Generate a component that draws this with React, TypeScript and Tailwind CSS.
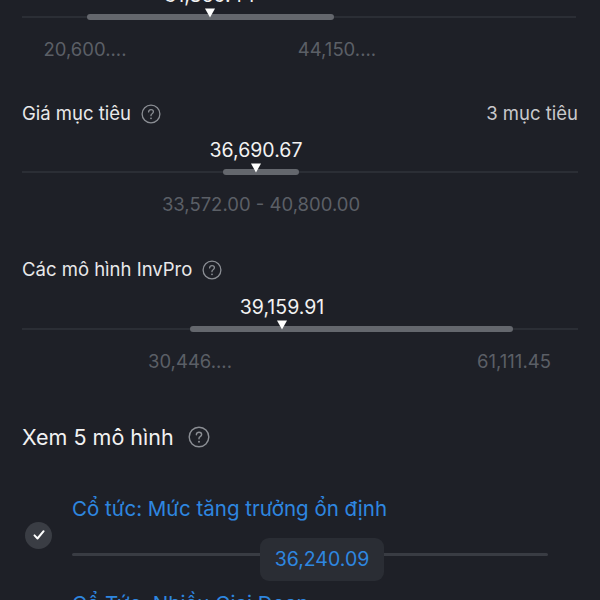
type Range = {
  value: string;
  thumb: number;
  from: number;
  to: number;
  labels: { text: string; at: number }[];
};

const W = 554;

function HelpIcon({ size = 20 }: { size?: number }) {
  return (
    <svg width={size} height={size} viewBox="0 0 20 20" fill="none">
      <circle cx="10" cy="10" r="8.9" stroke="#8b8e94" strokeWidth="1.3" />
      <path
        d="M7.6 7.9c0-1.4 1.1-2.3 2.4-2.3 1.4 0 2.4.9 2.4 2.1 0 1-.6 1.5-1.3 2-.7.4-1.1.8-1.1 1.6v.4"
        stroke="#8b8e94"
        strokeWidth="1.3"
        strokeLinecap="round"
      />
      <circle cx="10" cy="14.3" r="0.9" fill="#8b8e94" />
    </svg>
  );
}

function RangeSlider({ r }: { r: Range }) {
  return (
    <div className="flex flex-col">
      <div className="relative h-[22px]">
        <span
          className="absolute top-0 -translate-x-1/2 text-[19.5px] leading-[22px] text-[#f2f2f2] whitespace-nowrap"
          style={{ left: r.thumb }}
        >
          {r.value}
        </span>
      </div>
      <div className="relative h-[6px] mt-[8px]">
        <div className="absolute left-0 right-0 top-[2px] h-[2px] bg-[#2b2e35]" />
        <div
          className="absolute top-0 h-[6px] rounded-full bg-[#64676d]"
          style={{ left: r.from, width: r.to - r.from }}
        />
        <svg
          className="absolute -top-[6px] -translate-x-1/2"
          style={{ left: r.thumb }}
          width="11"
          height="10"
          viewBox="0 0 11 10"
        >
          <path d="M0.5 0.5h10L5.5 9.5z" fill="#ffffff" />
        </svg>
      </div>
      <div className="relative h-[20px] mt-[19px]">
        {r.labels.map((l, i) => (
          <span
            key={i}
            className="absolute top-0 -translate-x-1/2 text-[18.5px] leading-[20px] text-[#5b5f66] whitespace-nowrap"
            style={{ left: l.at }}
          >
            {l.text}
          </span>
        ))}
      </div>
    </div>
  );
}

export default function App() {
  const first: Range = {
    value: "31,865.44",
    thumb: 188,
    from: 65,
    to: 312,
    labels: [
      { text: "20,600....", at: 63 },
      { text: "44,150....", at: 315 },
    ],
  };
  const target: Range = {
    value: "36,690.67",
    thumb: 234,
    from: 201,
    to: 277,
    labels: [{ text: "33,572.00 - 40,800.00", at: 239 }],
  };
  const models: Range = {
    value: "39,159.91",
    thumb: 260,
    from: 168,
    to: 491,
    labels: [
      { text: "30,446....", at: 168 },
      { text: "61,111.45", at: 492 },
    ],
  };

  return (
    <div
      className="w-[600px] h-[600px] overflow-hidden bg-[#1e2027] text-[#e9e9ea]"
      style={{ fontFamily: "Inter, 'Noto Sans', sans-serif" }}
    >
      <div className="px-[22px] -mt-[16px] flex flex-col">
        <div style={{ width: W }}>
          <RangeSlider r={first} />
        </div>

        <div className="mt-[43px]">
          <div className="flex items-center justify-between h-[24px]">
            <div className="flex items-center gap-[10px]">
              <span className="text-[18.5px]">Giá mục tiêu</span>
              <HelpIcon />
            </div>
            <span className="text-[18.5px] text-[#c9c9cc]">3 mục tiêu</span>
          </div>
          <div className="mt-[13px]">
            <RangeSlider r={target} />
          </div>
        </div>

        <div className="mt-[44px]">
          <div className="flex items-center h-[24px] gap-[10px]">
            <span className="text-[18.5px]">Các mô hình InvPro</span>
            <HelpIcon />
          </div>
          <div className="mt-[14px]">
            <RangeSlider r={models} />
          </div>
        </div>

        <div className="mt-[52px] flex items-center h-[28px] gap-[14px]">
          <span className="text-[21.5px] text-[#f2f2f2]">Xem 5 mô hình</span>
          <HelpIcon size={22} />
        </div>

        <div className="mt-[46px] flex items-center">
          <div className="w-[27px] h-[27px] ml-[3px] mb-[8px] rounded-full bg-[#3a3d44] flex items-center justify-center">
            <svg width="14" height="14" viewBox="0 0 14 14" fill="none">
              <path
                d="M2.5 7.4l3 3.1L11.6 3.2"
                stroke="#ffffff"
                strokeWidth="2"
                strokeLinecap="round"
                strokeLinejoin="round"
              />
            </svg>
          </div>
          <div className="ml-[20px] w-[476px] flex flex-col">
            <span className="text-[20.5px] leading-[24px] text-[#2e87e0]">
              Cổ tức: Mức tăng trưởng ổn định
            </span>
            <div className="relative h-[43px] mt-[17px]">
              <div className="absolute left-0 right-0 top-[15px] h-[3px] rounded-full bg-[#393c43]" />
              <div className="absolute left-[188px] top-0 w-[124px] h-[43px] rounded-[9px] bg-[#2a2d34] flex items-center justify-center">
                <span className="text-[19.5px] text-[#2e87e0]">36,240.09</span>
              </div>
            </div>
          </div>
        </div>

        <div className="ml-[50px] mt-[11px]">
          <span className="text-[20.5px] leading-[24px] text-[#2e87e0]">
            Cổ Tức: Nhiều Giai Đoạn
          </span>
        </div>
      </div>
    </div>
  );
}
